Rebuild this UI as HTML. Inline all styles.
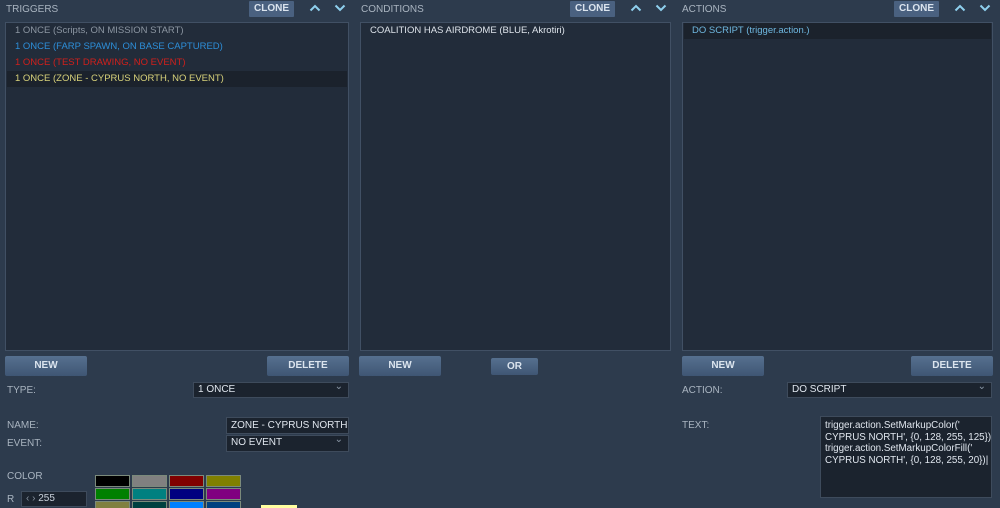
<!DOCTYPE html><html><head><style>
html,body{margin:0;height:508px;overflow:hidden}
body{width:1000px;background:#2d3b4d;font-family:"Liberation Sans",sans-serif;font-size:9.5px;color:#c8d0da;position:relative}
.a{position:absolute}
.hdr{color:#a9b4c0;font-size:10px}
.list{background:#222c3a;border:1px solid #415064;box-sizing:border-box}
.btn{position:absolute;background:linear-gradient(#56708f,#3f5674);color:#dbe4ee;font-weight:bold;font-size:10px;text-align:center;border-radius:2px;box-sizing:border-box}
.clone{position:absolute;background:#4a6180;color:#dbe4ee;font-weight:bold;font-size:10px;text-align:center;top:1px;height:16px;line-height:16px;border-radius:1px;width:45px}
.arr{position:absolute;top:3px}
.row{position:absolute;left:1px;right:1px;height:16px;line-height:16px;padding-left:8px}
.sel{background:#1b232e;border:1px solid #3e4b5c;box-sizing:border-box;padding-left:4px;color:#e0e6ee;font-size:10px;position:absolute;line-height:14px}
.dd::after{content:"⌄";position:absolute;right:5px;top:-3px;color:#8a97a6}
.sw{position:absolute;width:35px;height:12px;border:1px solid #7b8a7b;box-sizing:border-box}
</style></head><body>
<svg width="0" height="0" style="position:absolute"><defs>
<symbol id="up" viewBox="0 0 12 10"><path d="M1.5 7.5 L6 3 L10.5 7.5" fill="none" stroke="#8fd0ee" stroke-width="2"/></symbol>
<symbol id="dn" viewBox="0 0 12 10"><path d="M1.5 2.5 L6 7 L10.5 2.5" fill="none" stroke="#8fd0ee" stroke-width="2"/></symbol>
</defs></svg>
<div class="a hdr" style="left:6px;top:4px">TRIGGERS</div>
<div class="clone" style="left:249px">CLONE</div>
<svg class="arr" style="left:309px" width="12" height="10"><use href="#up"/></svg><svg class="arr" style="left:334px" width="12" height="10"><use href="#dn"/></svg>
<div class="a list" style="left:5px;top:22px;width:344px;height:329px">
<div class="row" style="top:0;color:#8c96a2">1 ONCE (Scripts, ON MISSION START)</div>
<div class="row" style="top:16px;color:#2d8ed8">1 ONCE (FARP SPAWN, ON BASE CAPTURED)</div>
<div class="row" style="top:32px;color:#d0201c">1 ONCE (TEST DRAWING, NO EVENT)</div>
<div class="row" style="top:48px;color:#d8d27a;background:#1b222c">1 ONCE (ZONE - CYPRUS NORTH, NO EVENT)</div>
</div>
<div class="a hdr" style="left:361px;top:4px">CONDITIONS</div>
<div class="clone" style="left:570px">CLONE</div>
<svg class="arr" style="left:630px" width="12" height="10"><use href="#up"/></svg><svg class="arr" style="left:655px" width="12" height="10"><use href="#dn"/></svg>
<div class="a list" style="left:360px;top:22px;width:311px;height:329px">
<div class="row" style="top:0;color:#dde3ea">COALITION HAS AIRDROME (BLUE, Akrotiri)</div></div>
<div class="a hdr" style="left:682px;top:4px">ACTIONS</div>
<div class="clone" style="left:894px">CLONE</div>
<svg class="arr" style="left:954px" width="12" height="10"><use href="#up"/></svg><svg class="arr" style="left:979px" width="12" height="10"><use href="#dn"/></svg>
<div class="a list" style="left:682px;top:22px;width:311px;height:329px">
<div class="row" style="top:0;color:#6fb8e0;background:#1b222c">DO SCRIPT (trigger.action.)</div></div>
<div class="btn" style="left:5px;top:356px;width:82px;height:20px;line-height:20px">NEW</div>
<div class="btn" style="left:267px;top:356px;width:82px;height:20px;line-height:20px">DELETE</div>
<div class="btn" style="left:359px;top:356px;width:82px;height:20px;line-height:20px">NEW</div>
<div class="btn" style="left:491px;top:358px;width:47px;height:17px;line-height:17px">OR</div>
<div class="btn" style="left:682px;top:356px;width:82px;height:20px;line-height:20px">NEW</div>
<div class="btn" style="left:911px;top:356px;width:82px;height:20px;line-height:20px">DELETE</div>
<div class="a hdr" style="left:7px;top:385px">TYPE:</div>
<div class="sel dd" style="left:193px;top:382px;width:156px;height:16px">1 ONCE</div>
<div class="a hdr" style="left:7px;top:420px">NAME:</div>
<div class="sel" style="left:226px;top:417px;width:123px;height:17px;line-height:16px">ZONE - CYPRUS NORTH</div>
<div class="a hdr" style="left:7px;top:438px">EVENT:</div>
<div class="sel dd" style="left:226px;top:435px;width:123px;height:17px">NO EVENT</div>
<div class="a hdr" style="left:7px;top:471px">COLOR</div>
<div class="a hdr" style="left:7px;top:494px">R</div>
<div class="sel" style="left:21px;top:491px;width:66px;height:16px;color:#c8d0da"><span style="color:#8893a0">‹ ›</span> 255</div>
<div class="sw" style="left:95px;top:475px;background:#000"></div>
<div class="sw" style="left:132px;top:475px;background:#808080"></div>
<div class="sw" style="left:169px;top:475px;background:#800000"></div>
<div class="sw" style="left:206px;top:475px;background:#808000"></div>
<div class="sw" style="left:95px;top:488px;background:#008000"></div>
<div class="sw" style="left:132px;top:488px;background:#008080"></div>
<div class="sw" style="left:169px;top:488px;background:#000080"></div>
<div class="sw" style="left:206px;top:488px;background:#800080"></div>
<div class="sw" style="left:95px;top:501px;background:#808040"></div>
<div class="sw" style="left:132px;top:501px;background:#004040"></div>
<div class="sw" style="left:169px;top:501px;background:#0080ff"></div>
<div class="sw" style="left:206px;top:501px;background:#004080"></div>
<div class="a" style="left:261px;top:505px;width:36px;height:3px;background:#ffffa0"></div>
<div class="a hdr" style="left:682px;top:385px">ACTION:</div>
<div class="sel dd" style="left:787px;top:382px;width:205px;height:16px">DO SCRIPT</div>
<div class="a hdr" style="left:682px;top:420px">TEXT:</div>
<div class="sel" style="left:820px;top:416px;width:172px;height:82px;padding:3px 4px;line-height:11.5px;font-size:9.8px;white-space:pre;overflow:hidden">trigger.action.SetMarkupColor('
CYPRUS NORTH', {0, 128, 255, 125})
trigger.action.SetMarkupColorFill('
CYPRUS NORTH', {0, 128, 255, 20})|</div>
</body></html>
